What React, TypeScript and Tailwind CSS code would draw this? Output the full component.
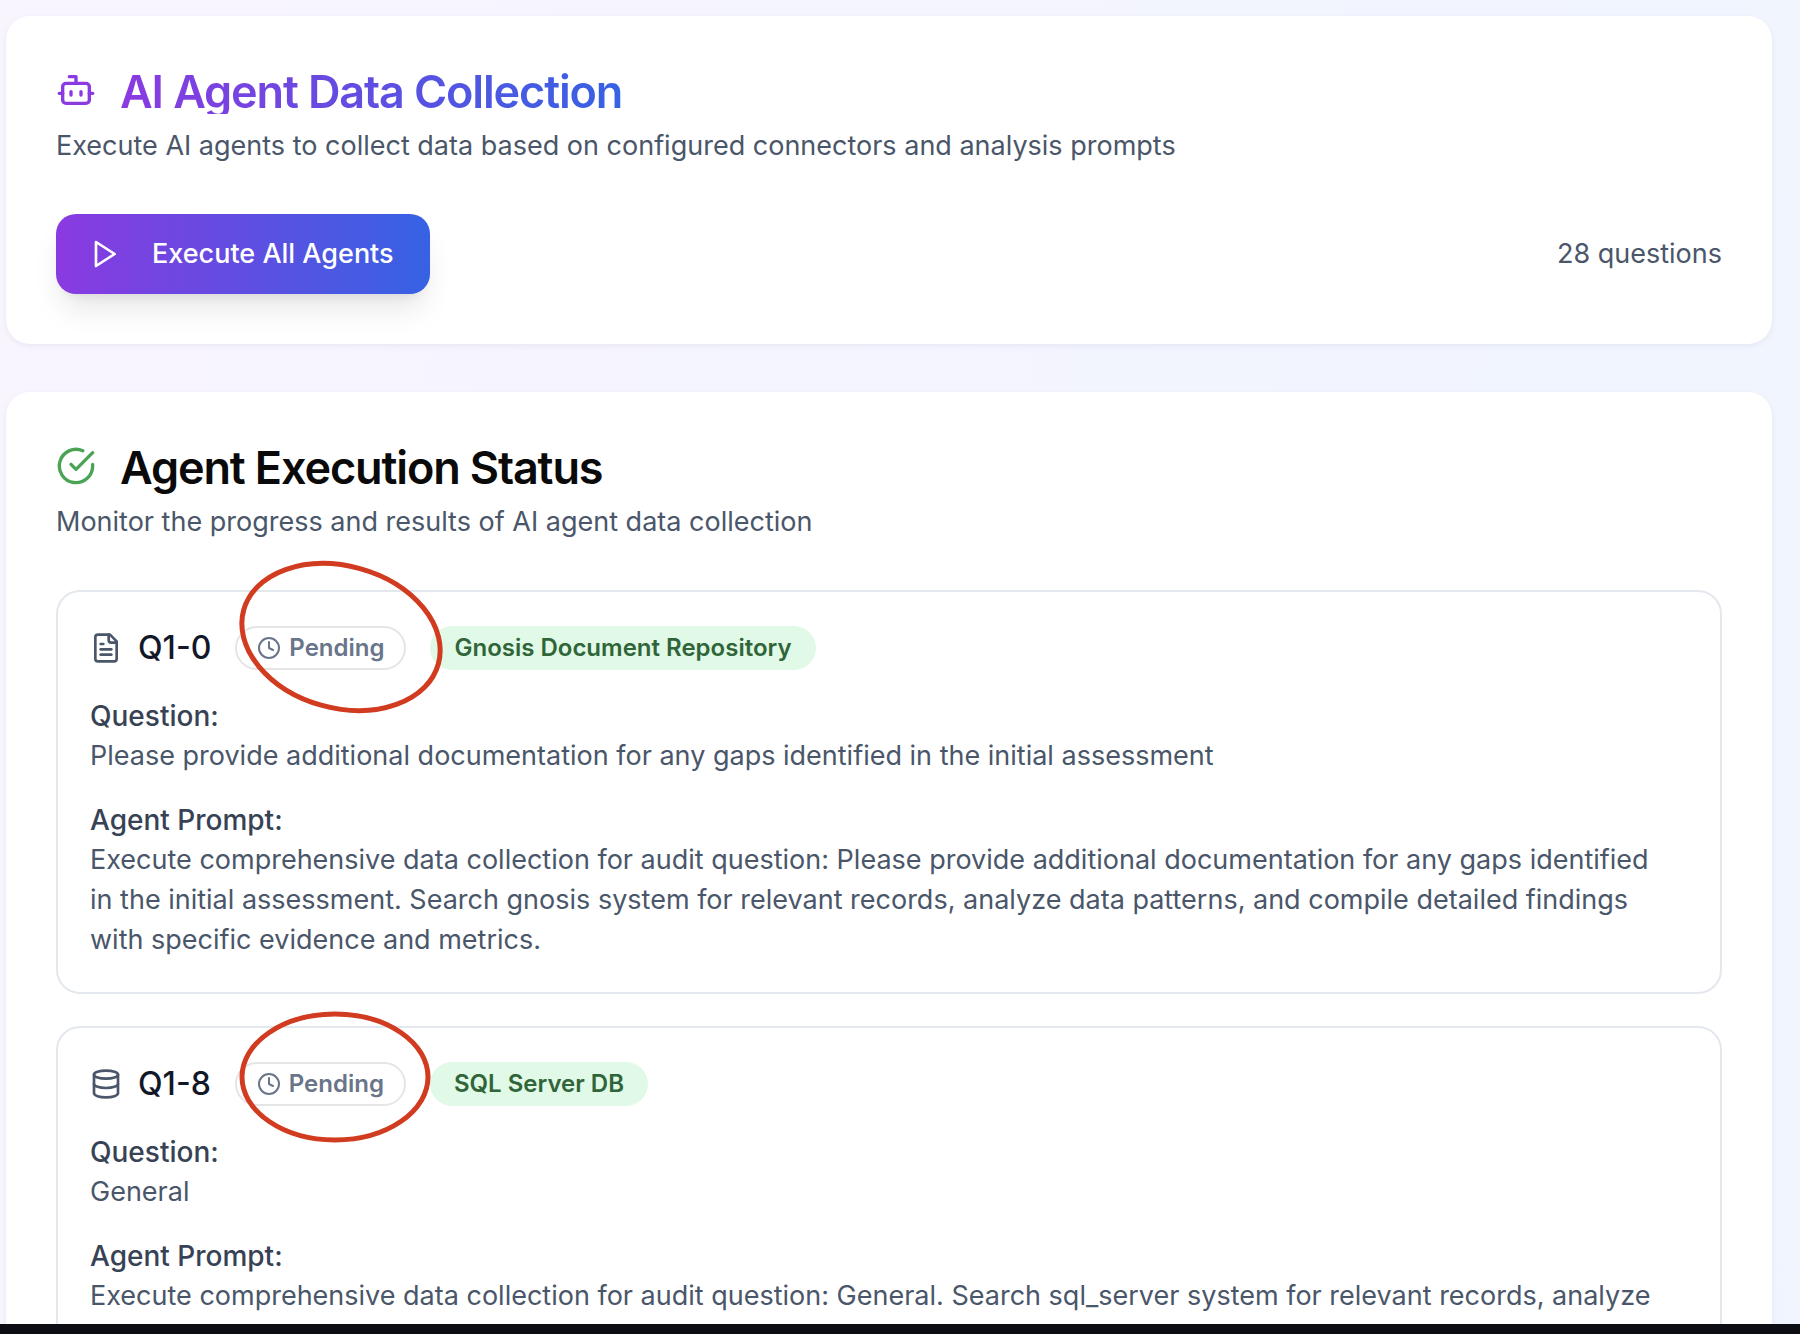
import type { ReactNode } from "react";
import { Bot, Clock, Database } from "lucide-react";

type Item = {
  id: string;
  icon: ReactNode;
  source: string;
  question: string;
  prompt: string;
  mark: ReactNode;
};

function StrokeIcon({ className, children }: { className: string; children: ReactNode }) {
  return (
    <svg viewBox="0 0 24 24" fill="none" stroke="currentColor" strokeWidth="2" strokeLinecap="round" strokeLinejoin="round" className={className} aria-hidden="true">
      {children}
    </svg>
  );
}

const items: Item[] = [
  {
    id: "Q1-0",
    icon: (
      <StrokeIcon className="size-8 shrink-0">
        <path d="M15 2H6a2 2 0 0 0-2 2v16a2 2 0 0 0 2 2h12a2 2 0 0 0 2-2V7Z" />
        <path d="M14 2v4a2 2 0 0 0 2 2h4" />
        <path d="M10 9H8" />
        <path d="M16 13H8" />
        <path d="M16 17H8" />
      </StrokeIcon>
    ),
    source: "Gnosis Document Repository",
    question: "Please provide additional documentation for any gaps identified in the initial assessment",
    prompt:
      "Execute comprehensive data collection for audit question: Please provide additional documentation for any gaps identified in the initial assessment. Search gnosis system for relevant records, analyze data patterns, and compile detailed findings with specific evidence and metrics.",
    mark: <ellipse cx="106" cy="75" rx="101" ry="71" transform="rotate(15.5 106 75)" />,
  },
  {
    id: "Q1-8",
    icon: <Database className="size-8 shrink-0" />,
    source: "SQL Server DB",
    question: "General",
    prompt:
      "Execute comprehensive data collection for audit question: General. Search sql_server system for relevant records, analyze data patterns, and compile detailed findings with specific evidence and metrics.",
    mark: <ellipse cx="100" cy="79" rx="93" ry="63" />,
  },
];

function Card({ children }: { children: ReactNode }) {
  return <section className="shrink-0 rounded-3xl bg-white p-[50px] shadow-[0_2px_6px_rgba(15,23,42,0.06)]">{children}</section>;
}

function AgentItem({ item }: { item: Item }) {
  return (
    <article className="rounded-3xl border-2 border-[#e3e8ef] p-8 pr-12">
      <header className="mb-6 flex h-12 items-center gap-6">
        <div className="flex items-center gap-4">
          {item.icon}
          <h3 className="text-[32px] leading-[50px] font-medium text-[#121828]">{item.id}</h3>
        </div>
        <span className="relative flex h-11 items-center gap-2 rounded-full border-2 border-[#e5e5e5] px-5 text-2xl font-semibold text-[#697589]">
          <Clock className="size-6 shrink-0" />
          Pending
          <svg viewBox="0 0 210 156" fill="none" stroke="#d13b20" strokeWidth="5" className="pointer-events-none absolute -top-[66px] -left-[2px] z-10 h-[156px] w-[210px] overflow-visible" aria-hidden="true">
            {item.mark}
          </svg>
        </span>
        <span className="flex h-11 items-center rounded-full bg-[#e1f9e7] px-6 text-2xl font-semibold text-[#30653a]">{item.source}</span>
      </header>
      <h4 className="text-[28px] font-medium text-[#374254]">Question:</h4>
      <p>{item.question}</p>
      <h4 className="mt-6 text-[28px] font-medium text-[#374254]">Agent Prompt:</h4>
      <p>{item.prompt}</p>
    </article>
  );
}

export default function App() {
  return (
    <div className="flex h-screen flex-col bg-[#0d0e14] font-['Inter',sans-serif] text-[27px] leading-10 text-[#4a5669]">
      <main className="flex min-h-0 flex-1 flex-col gap-12 overflow-hidden bg-linear-to-br/srgb from-[#f9f5ff] via-[#f0f5fe] to-[#eef2ff] bg-size-[100%_700%] pt-4 pr-7 pl-1.5">
        <Card>
          <div className="flex items-center gap-6">
            <Bot className="size-10 shrink-0 text-[#8a3ae0]" />
            <h1 className="h-12 bg-linear-to-r/srgb from-[#8a3ae0] to-[#3662e3] bg-clip-text text-[45px] leading-[52px] font-semibold tracking-tight text-transparent">
              AI Agent Data Collection
            </h1>
          </div>
          <p className="mt-3">Execute AI agents to collect data based on configured connectors and analysis prompts</p>
          <div className="mt-12 flex items-center justify-between">
            <button type="button" className="flex h-20 items-center gap-8 rounded-[20px] bg-linear-to-r/srgb from-[#8a3ae0] to-[#3662e3] pr-9 pl-8 font-medium text-white shadow-[0_20px_30px_-6px_rgba(0,0,0,0.1),0_8px_12px_-8px_rgba(0,0,0,0.1)]">
              <StrokeIcon className="size-8 shrink-0">
                <polygon points="6 3 20 12 6 21 6 3" />
              </StrokeIcon>
              Execute All Agents
            </button>
            <span>28 questions</span>
          </div>
        </Card>
        <Card>
          <div className="flex items-center gap-6">
            <StrokeIcon className="size-10 shrink-0 text-[#4ba455]">
              <path d="M22 11.08V12a10 10 0 1 1-5.93-9.14" />
              <path d="m9 11 3 3L22 4" />
            </StrokeIcon>
            <h2 className="h-12 text-[45px] leading-[52px] font-semibold tracking-tight text-neutral-950">Agent Execution Status</h2>
          </div>
          <p className="mt-3">Monitor the progress and results of AI agent data collection</p>
          <div className="mt-12 flex flex-col gap-8">
            {items.map((item) => (
              <AgentItem key={item.id} item={item} />
            ))}
          </div>
        </Card>
      </main>
      <div className="h-2.5 shrink-0" />
    </div>
  );
}
